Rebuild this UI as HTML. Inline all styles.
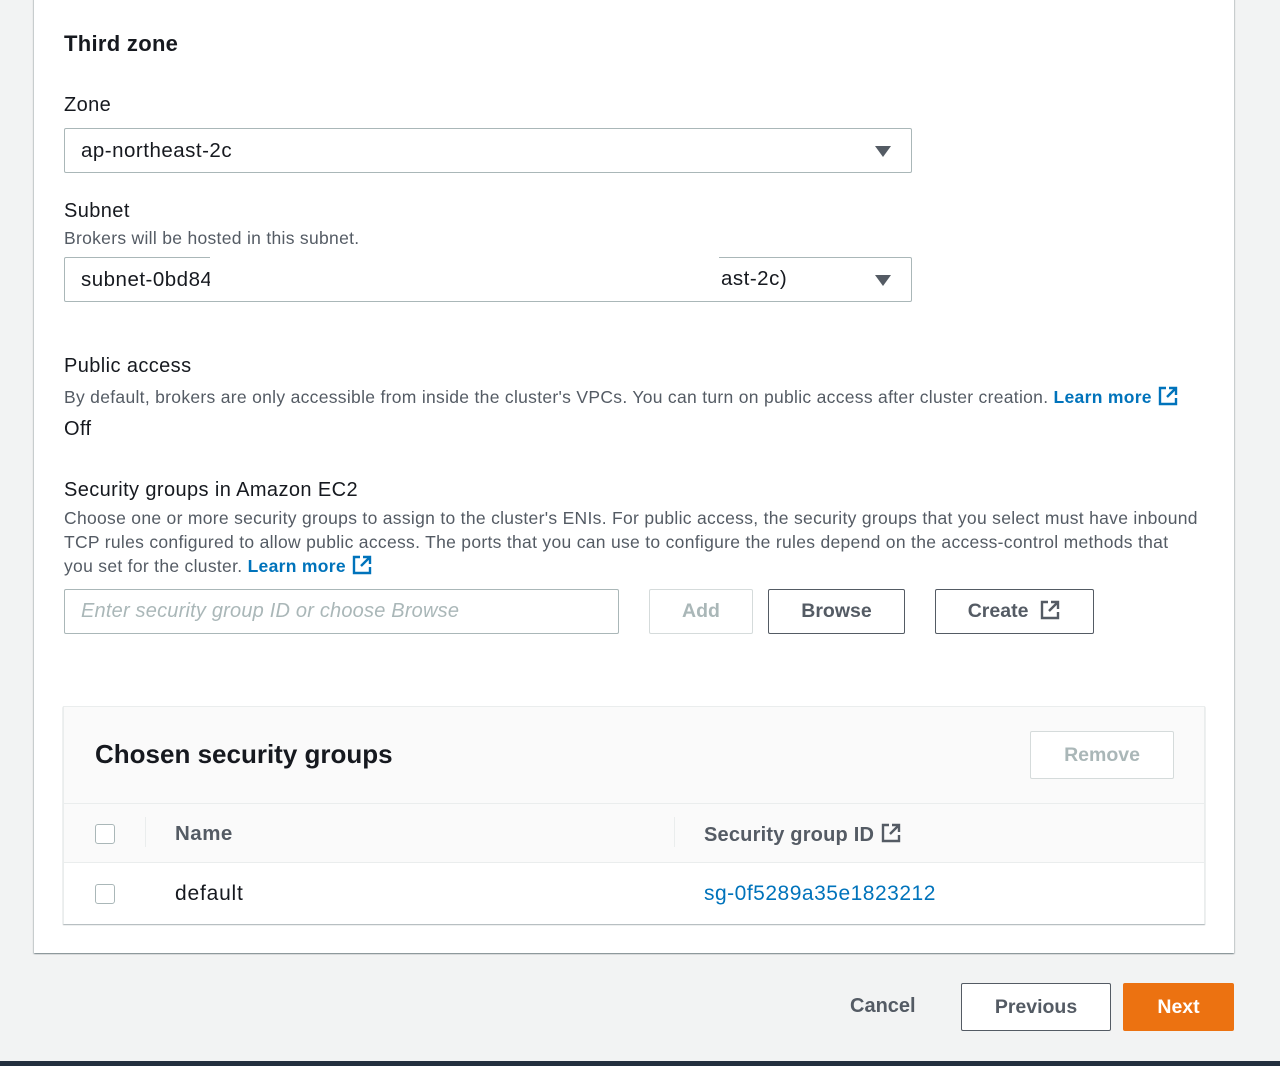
<!DOCTYPE html>
<html><head><meta charset="utf-8"><style>
*{box-sizing:border-box;margin:0;padding:0}
body{width:1280px;height:1066px;background:#f2f3f3;font-family:"Liberation Sans",sans-serif;color:#16191f;position:relative;overflow:hidden}
.a{position:absolute;white-space:nowrap}
.panel{position:absolute;left:34px;top:-2px;width:1200px;height:955px;background:#fff;box-shadow:0 1px 1px rgba(0,28,36,.3),1px 1px 1px rgba(0,28,36,.15),-1px 1px 1px rgba(0,28,36,.15)}
.lbl{font-size:20px;letter-spacing:0.4px}
.desc{font-size:17.5px;letter-spacing:0.3px;color:#545b64}
.sel{position:absolute;left:64px;width:848px;height:45px;border:1px solid #aab7b8;border-radius:2px;font-size:20.5px;letter-spacing:0.5px;padding:10px 16px}
.tri{position:absolute;right:20px;top:17px;width:0;height:0;border-left:8px solid transparent;border-right:8px solid transparent;border-top:11px solid #545b64}
.btn{position:absolute;height:45px;border:1px solid #545b64;border-radius:2px;font-size:19.5px;font-weight:bold;color:#545b64;text-align:center;line-height:42px;background:#fff}
.link{color:#0073bb;font-weight:bold}
.cb{position:absolute;width:20px;height:20px;border:1.5px solid #aab7b8;border-radius:3px;background:#fff}
</style></head><body>
<div class="panel"></div>
<div class="a" style="left:64px;top:31px;font-size:22px;font-weight:bold;letter-spacing:0.3px">Third zone</div>
<div class="a lbl" style="left:64px;top:94px">Zone</div>
<div class="sel" style="top:128px">ap-northeast-2c<div class="tri"></div></div>
<div class="a lbl" style="left:64px;top:200px">Subnet</div>
<div class="a desc" style="left:64px;top:228px">Brokers will be hosted in this subnet.</div>
<div class="sel" style="top:257px">subnet-0bd84<div class="tri"></div></div>
<div class="a" style="left:210px;top:255px;width:509px;height:46px;background:#fff"></div>
<div class="a" style="left:721px;top:267px;font-size:20.5px;letter-spacing:0.5px">ast-2c)</div>
<div class="a lbl" style="left:64px;top:355px">Public access</div>
<div class="a desc" style="left:64px;top:385px">By default, brokers are only accessible from inside the cluster's VPCs. You can turn on public access after cluster creation. <span class="link">Learn more</span> <svg width="22" height="22" viewBox="0 0 22 22" style="vertical-align:-4px"><path d="M9 3H3v16h16v-6M12 3h7v7M19 3l-9 9" fill="none" stroke="#0073bb" stroke-width="2.4"/></svg></div>
<div class="a lbl" style="left:64px;top:418px">Off</div>
<div class="a lbl" style="left:64px;top:479px">Security groups in Amazon EC2</div>
<div class="a desc" style="left:64px;top:507px;line-height:23.5px">Choose one or more security groups to assign to the cluster's ENIs. For public access, the security groups that you select must have inbound<br>TCP rules configured to allow public access. The ports that you can use to configure the rules depend on the access-control methods that<br>you set for the cluster. <span class="link">Learn more</span> <svg width="22" height="22" viewBox="0 0 22 22" style="vertical-align:-4px"><path d="M9 3H3v16h16v-6M12 3h7v7M19 3l-9 9" fill="none" stroke="#0073bb" stroke-width="2.4"/></svg></div>
<div class="a" style="left:64px;top:589px;width:555px;height:45px;border:1px solid #aab7b8;border-radius:2px;font-size:20px;letter-spacing:0.2px;font-style:italic;color:#aab7b8;padding:10px 16px">Enter security group ID or choose Browse</div>
<div class="btn" style="left:649px;top:589px;width:104px;border-color:#d5dbdb;color:#aab7b8">Add</div>
<div class="btn" style="left:768px;top:589px;width:137px">Browse</div>
<div class="btn" style="left:935px;top:589px;width:159px">Create &nbsp;<svg width="22" height="22" viewBox="0 0 22 22" style="vertical-align:-4px"><path d="M9 3H3v16h16v-6M12 3h7v7M19 3l-9 9" fill="none" stroke="#545b64" stroke-width="2.4"/></svg></div>
<div class="a" style="left:63px;top:706px;width:1142px;height:218px;background:#fafafa;border:1px solid #eaeded;box-shadow:0 1px 1px rgba(0,28,36,.35)">
 <div class="a" style="left:31px;top:32px;font-size:26px;font-weight:bold">Chosen security groups</div>
 <div class="btn" style="left:966px;top:24px;width:144px;height:48px;line-height:46px;border-color:#d5dbdb;color:#aab7b8">Remove</div>
 <div class="a" style="left:0;top:96px;width:1140px;height:1px;background:#eaeded"></div>
 <div class="cb" style="left:31px;top:117px"></div>
 <div class="a" style="left:81px;top:110px;width:1px;height:30px;background:#eaeded"></div>
 <div class="a" style="left:111px;top:115px;font-size:20.5px;letter-spacing:0.5px;font-weight:bold;color:#545b64">Name</div>
 <div class="a" style="left:610px;top:110px;width:1px;height:30px;background:#eaeded"></div>
 <div class="a" style="left:640px;top:115px;font-size:20px;letter-spacing:0.2px;font-weight:bold;color:#545b64">Security group ID <svg width="22" height="22" viewBox="0 0 22 22" style="vertical-align:-3px"><path d="M9 3H3v16h16v-6M12 3h7v7M19 3l-9 9" fill="none" stroke="#545b64" stroke-width="2.4"/></svg></div>
 <div class="a" style="left:0;top:155px;width:1140px;height:62px;background:#fff;border-top:1px solid #eaeded"></div>
 <div class="cb" style="left:31px;top:177px"></div>
 <div class="a" style="left:111px;top:175px;font-size:21px;letter-spacing:0.8px">default</div>
 <div class="a" style="left:640px;top:175px;font-size:21px;letter-spacing:0.5px;color:#0073bb">sg-0f5289a35e1823212</div>
</div>
<div class="a" style="left:850px;top:995px;font-size:20px;font-weight:bold;color:#545b64">Cancel</div>
<div class="btn" style="left:961px;top:983px;width:150px;height:48px;line-height:46px">Previous</div>
<div class="btn" style="left:1123px;top:983px;width:111px;height:48px;line-height:46px;background:#ec7211;border-color:#ec7211;color:#fff">Next</div>
<div class="a" style="left:0;top:1061px;width:1280px;height:5px;background:#232f3e"></div>
</body></html>
